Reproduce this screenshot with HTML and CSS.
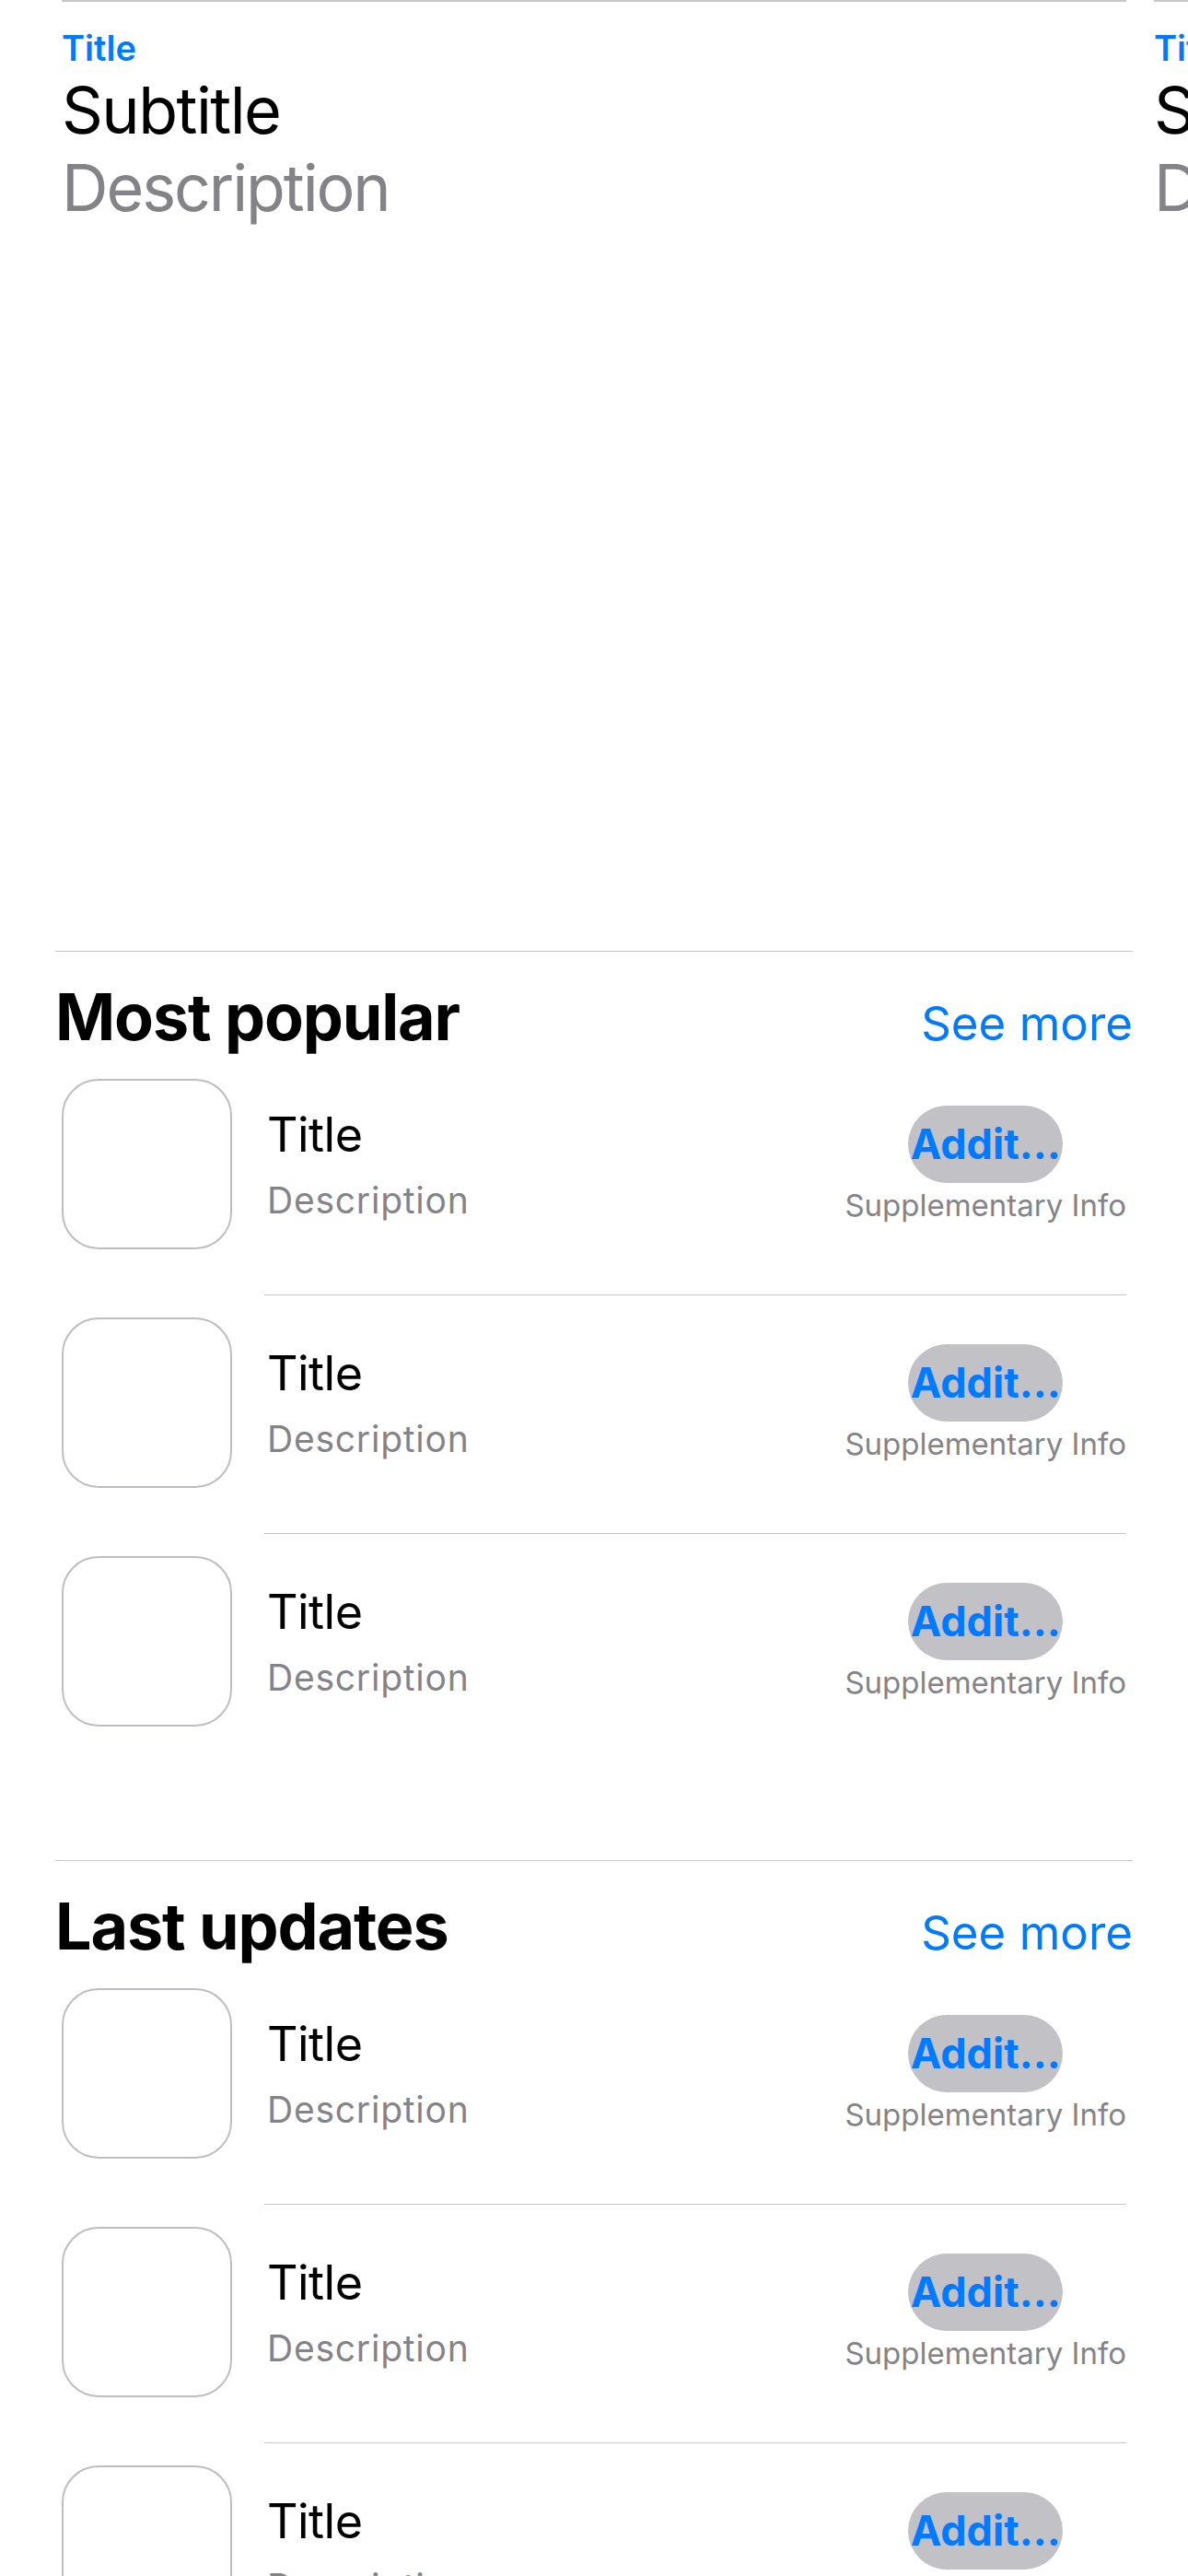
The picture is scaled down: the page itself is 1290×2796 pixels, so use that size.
FILE: index.html
```html
<!DOCTYPE html>
<html lang="en">
<head>
<meta charset="utf-8">
<title>Store</title>
<link rel="stylesheet" href="styles.css">
</head>
<body>
<div class="page">
  <div class="carousel">
    <article class="card">
      <div class="card-eyebrow">Title</div>
      <div class="card-subtitle">Subtitle</div>
      <div class="card-desc">Description</div>
      <div class="card-media"></div>
    </article>
    <article class="card">
      <div class="card-eyebrow">Title</div>
      <div class="card-subtitle">Subtitle</div>
      <div class="card-desc">Description</div>
      <div class="card-media"></div>
    </article>
  </div>

  <section class="shelf">
    <header class="shelf-head">
      <h2 class="shelf-title">Most popular</h2>
      <a class="see-more">See more</a>
    </header>
    <div class="list">
      <div class="row">
        <div class="icon"></div>
        <div class="row-text"><div class="row-title">Title</div><div class="row-desc">Description</div></div>
        <div class="row-aside"><div class="pill">Addit…</div><div class="supp">Supplementary Info</div></div>
      </div>
      <div class="sep"></div>
      <div class="row">
        <div class="icon"></div>
        <div class="row-text"><div class="row-title">Title</div><div class="row-desc">Description</div></div>
        <div class="row-aside"><div class="pill">Addit…</div><div class="supp">Supplementary Info</div></div>
      </div>
      <div class="sep"></div>
      <div class="row">
        <div class="icon"></div>
        <div class="row-text"><div class="row-title">Title</div><div class="row-desc">Description</div></div>
        <div class="row-aside"><div class="pill">Addit…</div><div class="supp">Supplementary Info</div></div>
      </div>
    </div>
  </section>

  <section class="shelf">
    <header class="shelf-head">
      <h2 class="shelf-title">Last updates</h2>
      <a class="see-more">See more</a>
    </header>
    <div class="list">
      <div class="row">
        <div class="icon"></div>
        <div class="row-text"><div class="row-title">Title</div><div class="row-desc">Description</div></div>
        <div class="row-aside"><div class="pill">Addit…</div><div class="supp">Supplementary Info</div></div>
      </div>
      <div class="sep"></div>
      <div class="row">
        <div class="icon"></div>
        <div class="row-text"><div class="row-title">Title</div><div class="row-desc">Description</div></div>
        <div class="row-aside"><div class="pill">Addit…</div><div class="supp">Supplementary Info</div></div>
      </div>
      <div class="sep"></div>
      <div class="row">
        <div class="icon"></div>
        <div class="row-text"><div class="row-title">Title</div><div class="row-desc">Description</div></div>
        <div class="row-aside"><div class="pill">Addit…</div><div class="supp">Supplementary Info</div></div>
      </div>
    </div>
  </section>
</div>
</body>
</html>
```

FILE: styles.css
```css
* {
  box-sizing: border-box;
  margin: 0;
  padding: 0;
}

html, body {
  background: #ffffff;
}

body {
  font-family: Inter, "Noto Sans", "Liberation Sans", sans-serif;
  color: #000000;
  width: 1290px;
  height: 2796px;
  overflow: hidden;
}

.page {
  width: 1290px;
  overflow: hidden;
}

/* Top carousel */
.carousel {
  display: flex;
  gap: 30px;
  padding-left: 67px;
  margin-bottom: 44px;
}

.card {
  flex: 0 0 1156px;
  border-top: 2px solid #c6c6cb;
}

.card-eyebrow {
  margin-top: 27px;
  font-size: 38px;
  line-height: 46px;
  font-weight: 600;
  color: #007aff;
}

.card-subtitle {
  font-size: 70px;
  line-height: 89px;
  letter-spacing: -0.022em;
  color: #000000;
}

.card-desc {
  font-size: 70px;
  line-height: 79px;
  letter-spacing: -0.03em;
  color: #848488;
}

.card-media {
  height: 745px;
}

/* Shelves */
.shelf {
  margin: 0 60px 145px;
  border-top: 1px solid #c6c6c8;
  padding-top: 29px;
}

.shelf-head {
  display: flex;
  justify-content: space-between;
  align-items: baseline;
}

.shelf-title {
  font-size: 70px;
  line-height: 84px;
  font-weight: 700;
  letter-spacing: -0.016em;
  color: #000000;
}

.see-more {
  font-size: 51px;
  line-height: 60px;
  color: #007aff;
  letter-spacing: 0;
}

.list {
  margin: 25px 7px 0;
}

.row {
  display: flex;
  align-items: center;
  height: 185px;
}

.icon {
  flex: none;
  width: 185px;
  height: 185px;
  border: 2px solid #bdbdc3;
  border-radius: 40px;
  background: #ffffff;
}

.row-text {
  flex: 1;
  margin-left: 38px;
}

.row-title {
  font-size: 52px;
  line-height: 60px;
  letter-spacing: -0.01em;
  color: #000000;
}

.row-desc {
  margin-top: 18px;
  font-size: 39px;
  line-height: 46px;
  letter-spacing: 0.02em;
  color: #848488;
}

.row-aside {
  display: flex;
  flex-direction: column;
  align-items: center;
}

.pill {
  width: 168px;
  height: 84px;
  border-radius: 42px;
  background: #c1c1c6;
  color: #007aff;
  font-size: 45px;
  line-height: 84px;
  font-weight: 700;
  text-align: center;
  white-space: nowrap;
  overflow: hidden;
}

.supp {
  margin-top: 4px;
  font-size: 33px;
  line-height: 40px;
  letter-spacing: 0;
  color: #848488;
  white-space: nowrap;
}

.sep {
  height: 1px;
  background: #c6c6c8;
  margin: 49px 0 24px 220px;
}
```
